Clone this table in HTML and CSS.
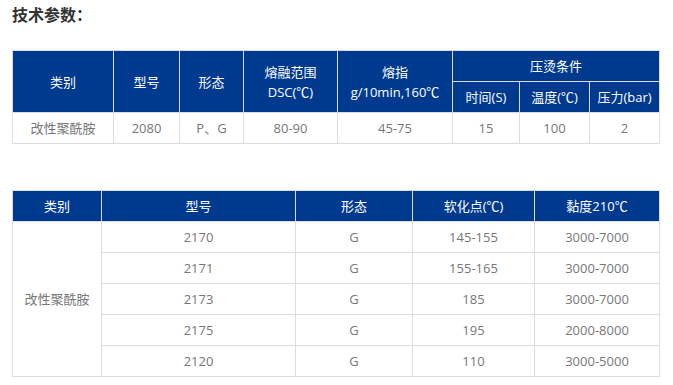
FILE: index.html
```html
<!DOCTYPE html>
<html lang="zh">
<head>
<meta charset="utf-8">
<link rel="stylesheet" href="styles.css">
</head>
<body>
<div class="page">
  <h2 class="title">技术参数：</h2>
  <table class="spec spec-a">
    <colgroup>
      <col style="width:101px"><col style="width:66px"><col style="width:64px"><col style="width:94px"><col style="width:115px"><col style="width:67px"><col style="width:70px"><col style="width:70px">
    </colgroup>
    <thead>
      <tr>
        <th rowspan="2">类别</th>
        <th rowspan="2">型号</th>
        <th rowspan="2">形态</th>
        <th rowspan="2">熔融范围<br>DSC(℃)</th>
        <th rowspan="2">熔指<br>g/10min,160℃</th>
        <th colspan="3">压烫条件</th>
      </tr>
      <tr>
        <th>时间(S)</th>
        <th>温度(℃)</th>
        <th>压力(bar)</th>
      </tr>
    </thead>
    <tbody>
      <tr>
        <td>改性聚酰胺</td><td>2080</td><td>P、G</td><td>80-90</td><td>45-75</td><td>15</td><td>100</td><td>2</td>
      </tr>
    </tbody>
  </table>

  <table class="spec spec-b">
    <colgroup>
      <col style="width:89px"><col style="width:194px"><col style="width:117px"><col style="width:122px"><col style="width:125px">
    </colgroup>
    <thead>
      <tr><th>类别</th><th>型号</th><th>形态</th><th>软化点(℃)</th><th>黏度210℃</th></tr>
    </thead>
    <tbody>
      <tr><td rowspan="5">改性聚酰胺</td><td>2170</td><td>G</td><td>145-155</td><td>3000-7000</td></tr>
      <tr><td>2171</td><td>G</td><td>155-165</td><td>3000-7000</td></tr>
      <tr><td>2173</td><td>G</td><td>185</td><td>3000-7000</td></tr>
      <tr><td>2175</td><td>G</td><td>195</td><td>2000-8000</td></tr>
      <tr><td>2120</td><td>G</td><td>110</td><td>3000-5000</td></tr>
    </tbody>
  </table>
</div>
</body>
</html>
```

FILE: styles.css
```css
html, body {
  margin: 0;
  padding: 0;
  background: #fff;
}
.page {
  padding: 4px 12px 0 12px;
  font-family: "Open Sans", "Noto Sans CJK SC", sans-serif;
}
.title {
  margin: 0;
  font-family: "Noto Sans CJK SC", sans-serif;
  font-size: 16px;
  line-height: 20px;
  font-weight: bold;
  color: #333;
}
.spec {
  border-collapse: collapse;
  table-layout: fixed;
  width: 647px;
  font-size: 13px;
}
.spec-a {
  margin-top: 26px;
}
.spec-b {
  margin-top: 46px;
}
.spec th,
.spec td {
  border: 1px solid #dcdcdc;
  padding: 0;
  text-align: center;
  vertical-align: middle;
  line-height: 20px;
}
.spec th {
  background: #003a8e;
  color: #fff;
  font-weight: normal;
  height: 30px;
}
.spec td {
  color: #777;
  height: 30px;
}
```
